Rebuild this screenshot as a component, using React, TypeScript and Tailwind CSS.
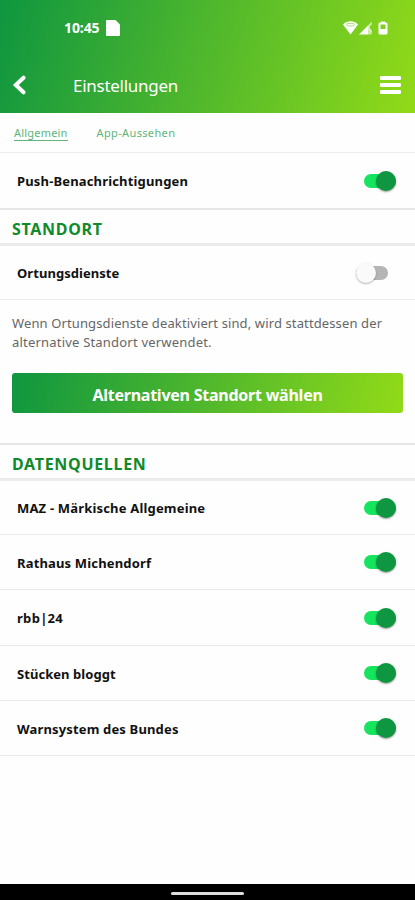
import { useState } from 'react';
import clsx from 'clsx';

interface SettingItem {
  id: string;
  label: string;
  spacing: string;
  height: string;
}

const sources: SettingItem[] = [
  { id: 'maz', label: 'MAZ - Märkische Allgemeine', spacing: 'tracking-[0.18px]', height: 'h-[53px]' },
  { id: 'rathaus', label: 'Rathaus Michendorf', spacing: 'tracking-[0.16px]', height: 'h-[54px]' },
  { id: 'rbb', label: 'rbb|24', spacing: 'tracking-[0.3px]', height: 'h-[55px]' },
  { id: 'stuecken', label: 'Stücken bloggt', spacing: 'tracking-[0.05px]', height: 'h-[54px]' },
  { id: 'warnsystem', label: 'Warnsystem des Bundes', spacing: 'tracking-[0.16px]', height: 'h-[54px]' },
];

function Toggle({ on, label, onToggle }: { on: boolean; label: string; onToggle: () => void }) {
  return (
    <button
      type="button"
      role="switch"
      aria-checked={on}
      aria-label={label}
      onClick={onToggle}
      className={clsx('flex h-5 w-[40px] shrink-0 items-center', on ? 'justify-end' : 'justify-start')}
    >
      <span
        className={clsx(
          'flex h-[14px] items-center rounded-full',
          on ? 'w-8 justify-end bg-[#16e45e]' : 'w-8 justify-start bg-[#b5b5b7]',
        )}
      >
        <span
          className={clsx(
            'h-5 w-5 shrink-0 rounded-full',
            on ? 'bg-[#0f9640] shadow-[0_1px_2px_rgba(0,0,0,0.4)]' : 'bg-[#fafafa] shadow-[0_1px_2px_rgba(0,0,0,0.3)]',
          )}
        />
      </span>
    </button>
  );
}

interface SettingRowProps {
  label: string;
  spacing: string;
  height: string;
  initial?: boolean;
}

function SettingRow({ label, spacing, height, initial = true }: SettingRowProps) {
  const [on, setOn] = useState(initial);

  return (
    <div className={clsx('flex items-center justify-between pr-[19px] pl-[17px]', height)}>
      <span className={clsx('pt-[3px] text-[13px] font-bold text-[#111]', spacing)}>{label}</span>
      <Toggle on={on} label={label} onToggle={() => setOn(prev => !prev)} />
    </div>
  );
}

function SectionTitle({ children }: { children: string }) {
  return (
    <h2 className="flex h-[38px] items-center border-t-2 border-b-[3px] border-t-[#e6e6e6] border-b-[#ebebeb] px-3 pt-[5px] text-base font-bold tracking-[0.7px] text-[#108a2c]">
      {children}
    </h2>
  );
}

function StatusBar() {
  return (
    <div className="flex h-[55px] items-center justify-between pr-[27px] pl-[64px]">
      <div className="flex items-center gap-[7px]">
        <span className="text-[14px] font-bold tracking-[-0.1px]">10:45</span>
        <svg width="14" height="16" viewBox="0 0 14 16" fill="currentColor">
          <path d="M1 0h8.500L14 4.500V15a1 1 0 0 1-1 1H1a1 1 0 0 1-1-1V1a1 1 0 0 1 1-1z" />
        </svg>
      </div>
      <div className="flex items-center">
        <svg width="15" height="14" viewBox="0 0 15 14" fill="currentColor">
          <path d="M0 3.500C4-.8 11-.8 15 3.500L7.500 13.500z" />
          <path d="M3 3.300C5.500 2 9.500 2 12 3.300M3.500 4.300C6 5.300 9 5.300 11.500 4.300" fill="none" stroke="#72c827" strokeWidth=".6" />
        </svg>
        <svg className="ml-[1px]" width="14" height="14" viewBox="0 0 14 14" fill="currentColor">
          <path d="M0 13.500L9 4.500v9z" />
          <path d="M8.500 5L12.700.6v3.400l-2 1v4l2 1v3.500H9z" opacity=".6" />
          <path d="M10 5v3.500h2V11" fill="none" stroke="currentColor" strokeWidth="1" opacity=".7" />
        </svg>
        <svg className="ml-[5px]" width="10" height="14" viewBox="0 0 10 14">
          <path d="M3 .5h4v1h1A1.500 1.500 0 0 1 9.500 3v9A1.500 1.500 0 0 1 8 13.500H2A1.500 1.500 0 0 1 .5 12V3A1.500 1.500 0 0 1 2 1.500h1z" fill="currentColor" />
          <path d="M2.500 3.500h5v4.500h-5z" fill="#80ce22" />
        </svg>
      </div>
    </div>
  );
}

export default function App() {
  return (
    <div className="flex h-[900px] w-full flex-col overflow-hidden bg-[#fefefe] font-['Noto_Sans','Open_Sans',sans-serif]">
      <header className="h-[113px] shrink-0 bg-[linear-gradient(105deg,#0f9640_0%,#92da18_100%)] text-white">
        <StatusBar />
        <div className="flex h-[60px] items-center pr-[14px] pl-[12px]">
          <button type="button" aria-label="Zurück">
            <svg width="15" height="20" viewBox="0 0 15 20" fill="none" stroke="currentColor" strokeWidth="4" strokeLinecap="round">
              <path d="M11.500 2.700L3.800 10l7.700 7.300" />
            </svg>
          </button>
          <h1 className="ml-[46px] pt-[2px] text-[17px] leading-6 tracking-[-0.27px]">Einstellungen</h1>
          <button type="button" aria-label="Menü" className="ml-auto flex flex-col gap-[3px]">
            <span className="h-1 w-[21px] rounded-[1px] bg-white" />
            <span className="h-1 w-[21px] rounded-[1px] bg-white" />
            <span className="h-1 w-[21px] rounded-[1px] bg-white" />
          </button>
        </div>
      </header>

      <nav className="flex h-10 shrink-0 items-center gap-[29px] border-b border-[#ececec] pt-[2px] pl-[14px] text-[11px] leading-[14px] text-[#5fb57c]">
        <a className="border-b border-[#5fb57c] tracking-[0.2px]">Allgemein</a>
        <a className="border-b border-transparent tracking-[0.35px]">App-Aussehen</a>
      </nav>

      <main className="flex-1">
        <SettingRow label="Push-Benachrichtigungen" spacing="tracking-[0.16px]" height="h-[55px]" />

        <SectionTitle>STANDORT</SectionTitle>
        <SettingRow label="Ortungsdienste" spacing="tracking-[0.05px]" height="h-[53px]" initial={false} />
        <p className="border-t border-[#ececec] px-3 pt-[14px] text-[13px] leading-[19px] tracking-[0.12px] text-[#666]">
          <span className="block whitespace-nowrap">Wenn Ortungsdienste deaktiviert sind, wird stattdessen der</span>
          <span className="block whitespace-nowrap tracking-[0.2px]">alternative Standort verwendet.</span>
        </p>
        <button
          type="button"
          className="mx-3 mt-[21px] mb-[30px] flex h-10 w-[391px] items-center justify-center rounded-[3px] bg-[linear-gradient(105deg,#0f9640_0%,#92da18_100%)] pt-[3px] text-base font-bold tracking-[-0.24px] text-white"
        >
          Alternativen Standort wählen
        </button>

        <SectionTitle>DATENQUELLEN</SectionTitle>
        {sources.map(source => (
          <div key={source.id} className="border-b border-[#e9e9e9]">
            <SettingRow label={source.label} spacing={source.spacing} height={source.height} />
          </div>
        ))}
      </main>

      {/* Gesture bar */}
      <footer className="flex h-4 shrink-0 items-center justify-center bg-black pt-[2px]">
        <div className="h-[3px] w-[73px] rounded-full bg-[#dedede]" />
      </footer>
    </div>
  );
}
